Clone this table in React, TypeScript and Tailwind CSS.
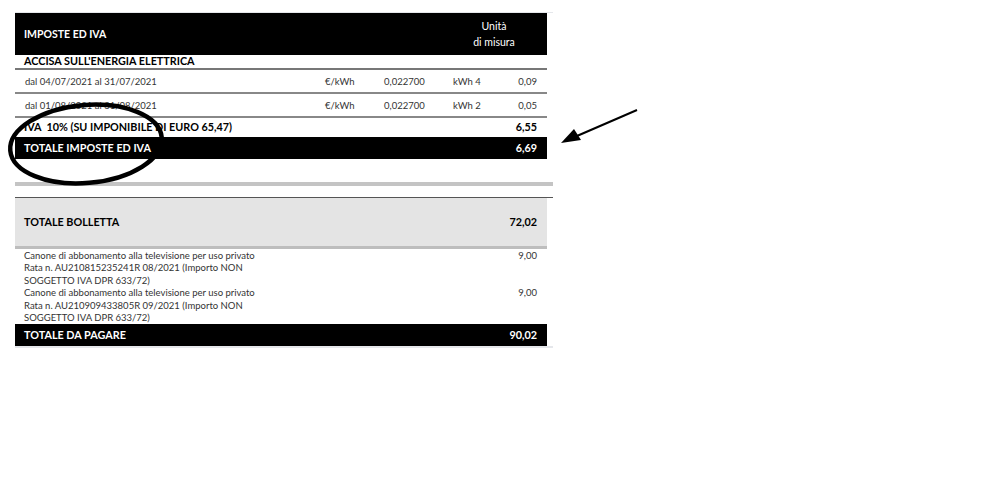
const rows = [
  { period: 'dal 04/07/2021 al 31/07/2021', unit: '€/kWh', price: '0,022700', qty: 'kWh 4', amount: '0,09' },
  { period: 'dal 01/08/2021 al 31/08/2021', unit: '€/kWh', price: '0,022700', qty: 'kWh 2', amount: '0,05' },
]

const canone = [
  { lines: ['Canone di abbonamento alla televisione per uso privato', 'Rata n. AU210815235241R 08/2021 (Importo NON', 'SOGGETTO IVA DPR 633/72)'], amount: '9,00' },
  { lines: ['Canone di abbonamento alla televisione per uso privato', 'Rata n. AU210909433805R 09/2021 (Importo NON', 'SOGGETTO IVA DPR 633/72)'], amount: '9,00' },
]

export default function App() {
  return (
    <div className="relative w-[1000px] h-[485px] bg-white text-black font-['Lato',sans-serif]">
      <div className="pt-[12px] pl-[15px]">
        <div className="w-[538px] h-px bg-gray-200" />

        {/* intestazione */}
        <div className="w-[532px] h-[42px] bg-black text-white flex items-center justify-between">
          <span className="pl-[9px] pt-[1px] text-[10.5px] font-bold">IMPOSTE ED IVA</span>
          <span className="w-[100px] pr-[6px] text-center text-[10.5px] leading-[16px]">
            Unità
            <br />
            di misura
          </span>
        </div>

        <div className="w-[532px]">
          <div className="h-[15px] border-b-2 border-[#777] flex items-center pl-[9px] text-[10.8px] font-bold leading-none">
            ACCISA SULL'ENERGIA ELETTRICA
          </div>
          {rows.map((r) => (
            <div key={r.period} className="h-[24px] pt-[3px] border-b-2 border-[#888] flex items-center text-[9.5px] text-[#333]">
              <span className="pl-[10px] w-[310px]">{r.period}</span>
              <span className="w-[59px]">{r.unit}</span>
              <span className="w-[69px]">{r.price}</span>
              <span className="w-[50px]">{r.qty}</span>
              <span className="w-[34px] text-right">{r.amount}</span>
            </div>
          ))}
          <div className="h-[19px] flex items-center justify-between text-[10.8px] font-bold">
            <span className="pl-[9px]">IVA&nbsp; 10% (SU IMPONIBILE DI EURO 65,47)</span>
            <span className="pr-[10px]">6,55</span>
          </div>
          <div className="h-[22px] bg-black text-white flex items-center justify-between text-[10.8px] font-bold">
            <span className="pl-[9px]">TOTALE IMPOSTE ED IVA</span>
            <span className="pr-[10px]">6,69</span>
          </div>
        </div>

        <div className="mt-[23px] w-[538px] h-[4px] bg-[#c4c4c4]" />

        <div className="mt-[11px] w-[538px] h-px bg-[#555]" />
        <div className="w-[532px] h-[51px] bg-[#e4e4e4] border-b-[3px] border-[#bdbdbd] flex items-center justify-between text-[10.8px] font-bold">
          <span className="pl-[9px] pt-[1px]">TOTALE BOLLETTA</span>
          <span className="pr-[10px] pt-[1px]">72,02</span>
        </div>

        <div className="w-[532px] pt-[1px] h-[75px] text-[9.5px] leading-[12.4px] text-[#333]">
          {canone.map((c, i) => (
            <div key={i} className="flex justify-between">
              <div className="pl-[9px]">
                {c.lines.map((l) => (
                  <div key={l}>{l}</div>
                ))}
              </div>
              <span className="pr-[10px]">{c.amount}</span>
            </div>
          ))}
        </div>

        <div className="w-[532px] h-[22px] bg-black text-white flex items-center justify-between text-[10.8px] font-bold">
          <span className="pl-[9px]">TOTALE DA PAGARE</span>
          <span className="pr-[10px]">90,02</span>
        </div>
        <div className="w-[538px] h-[2px] bg-gray-200" />
      </div>

      {/* annotazioni a mano */}
      <svg className="absolute left-0 top-0 pointer-events-none" width="1000" height="485">
        <ellipse cx="86" cy="144" rx="76" ry="39" transform="rotate(-5 86 144)" fill="none" stroke="#000" strokeWidth="4.5" />
        <line x1="637" y1="110" x2="570" y2="139" stroke="#000" strokeWidth="2" />
        <polygon points="561,143 574,129 581,140" fill="#000" />
      </svg>
    </div>
  )
}
